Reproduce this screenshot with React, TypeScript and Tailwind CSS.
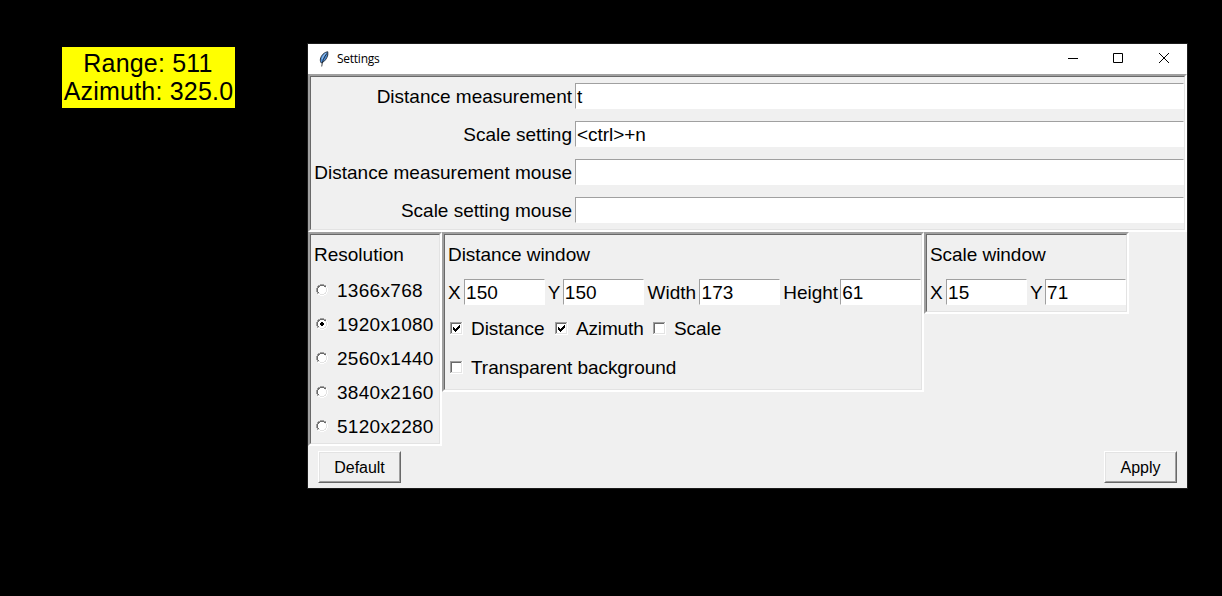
import type { ReactNode } from "react";

function Sunken({ className, children }: { className: string; children: ReactNode }) {
  return (
    <div className={`border-2 border-t-[#a0a0a0] border-l-[#a0a0a0] border-r-white border-b-white ${className}`}>
      <div className="h-full w-full border border-t-[#696969] border-l-[#696969] border-r-[#e3e3e3] border-b-[#e3e3e3]">
        {children}
      </div>
    </div>
  );
}

function Entry({ value, className }: { value: string; className: string }) {
  return (
    <div
      className={`h-[26px] border border-t-[#a0a0a0] border-l-[#a0a0a0] border-r-white border-b-white bg-white pl-px leading-[26px] whitespace-pre ${className}`}
    >
      {value}
    </div>
  );
}

function Check({ on }: { on: boolean }) {
  return (
    <svg width="13" height="13" viewBox="0 0 13 13" shapeRendering="crispEdges" className="shrink-0">
      <path d="M0 0h13v13H0z" fill="#fff" />
      <path d="M0 0h12v1H1v11H0z" fill="#a0a0a0" />
      <path d="M1 1h10v1H2v9H1z" fill="#696969" />
      <path d="M11 1h1v11H1v-1h10z" fill="#e3e3e3" />
      {on && <path d="M3 5h1v1h1v1h1V6h1V5h1V4h1V3h1v3H9v1H8v1H7v1H6v1H5V9H4V8H3z" fill="#000" />}
    </svg>
  );
}

function Radio({ on }: { on: boolean }) {
  return (
    <svg width="12" height="12" viewBox="0 0 12 12" shapeRendering="crispEdges" className="shrink-0">
      <path d="M4 1h4v1h2v2h1v4h-1v2H8v1H4v-1H2V8H1V4h1V2h2z" fill="#fff" />
      <path d="M4 0h4v1H4zM2 1h2v1H2zM8 1h2v1H8zM1 2h1v2H1zM0 4h1v4H0zM1 8h1v2H1z" fill="#a0a0a0" />
      <path d="M4 1h4v1H4zM2 2h2v1H2zM8 2h2v1H8zM2 3h1v1H2zM1 4h1v4H1zM2 8h1v1H2z" fill="#696969" />
      <path d="M9 3h1v1H9zM10 4h1v4h-1zM9 8h1v1H9zM8 9h2v1H8zM2 9h2v1H2zM4 10h4v1H4z" fill="#e3e3e3" />
      <path d="M10 2h1v2h-1zM11 4h1v4h-1zM10 8h1v2h-1zM8 10h2v1H8zM2 10h2v1H2zM4 11h4v1H4z" fill="#fff" />
      {on && <path d="M5 4h2v1h1v2H7v1H5V7H4V5h1z" fill="#000" />}
    </svg>
  );
}

function Button({ label, className }: { label: string; className: string }) {
  return (
    <div className={`h-8 border border-t-white border-l-white border-r-[#696969] border-b-[#696969] ${className}`}>
      <div className="h-full border border-t-[#e3e3e3] border-l-[#e3e3e3] border-r-[#a0a0a0] border-b-[#a0a0a0] text-center text-[16px] leading-[30px]">
        {label}
      </div>
    </div>
  );
}

const hotkeys = [
  ["Distance measurement", "t"],
  ["Scale setting", "<ctrl>+n"],
  ["Distance measurement mouse", ""],
  ["Scale setting mouse", ""],
];
const resolutions = ["1366x768", "1920x1080", "2560x1440", "3840x2160", "5120x2280"];

export default function App() {
  return (
    <div className="flex h-[596px] w-[1222px] items-start overflow-hidden bg-black font-['Liberation_Sans',Arial,sans-serif] text-[19px] tracking-[-0.05px] text-black">
      <div className="mt-[47px] ml-[62px] flex h-[61px] w-[173px] flex-col items-center bg-[#ffff00] pt-[2px] text-[25px] leading-[28px] tracking-[0.2px] whitespace-nowrap">
        <div className="pr-px">Range: 511</div>
        <div>Azimuth: 325.0</div>
      </div>
      <div className="mt-[44px] ml-[73px] flex h-[444px] w-[879px] flex-col bg-[#f0f0f0] outline outline-[#1c1c1c]">
        <div className="flex h-[30px] shrink-0 items-center bg-white">
          <svg width="10" height="16" viewBox="0 0 10 16" className="-mt-px ml-[11px]">
            <path d="M8.800.8C5.500 1 2 4.500 1.400 8c-.2 1.800 0 3 1 4C5.500 10.800 8 7.500 8.800 4z" fill="#4f8fd8" stroke="#1b222c" strokeWidth=".9" />
            <path d="M7 2.200C5 3.500 3.800 5.500 3.200 8" fill="none" stroke="#8fbdf0" strokeWidth="1.200" />
            <path d="M7.800 2.500C5 6.500 3.400 9.500 2.700 15.500" fill="none" stroke="#10151c" strokeWidth=".8" />
          </svg>
          <div className="ml-[8px] font-['Open_Sans','Noto_Sans',sans-serif] text-[12px] tracking-[-0.25px]">Settings</div>
          <svg width="167" height="30" viewBox="0 0 167 30" className="ml-auto shrink-0" fill="none" stroke="#000">
            <path d="M48 14.500h10" />
            <path d="M93.500 9.500h9v9h-9z" />
            <path d="M139 9l10 10M149 9l-10 10" />
          </svg>
        </div>
        <Sunken className="h-[158px] shrink-0">
          {hotkeys.map(([label, value]) => (
            <div key={label} className="flex h-[38px] items-center">
              <div className="w-[261px] shrink-0 pt-[2px] text-right tracking-normal whitespace-nowrap">{label}</div>
              <Entry value={value} className="ml-[3px] grow" />
            </div>
          ))}
        </Sunken>
        <div className="flex h-[214px] shrink-0 items-start">
          <Sunken className="h-[214px] w-[134px]">
            <div className="h-[38px] pl-[3px] leading-[40px] tracking-normal">Resolution</div>
            {resolutions.map((r) => (
              <div key={r} className="flex h-[34px] items-center pl-[5px]">
                <Radio on={r === "1920x1080"} />
                <span className="ml-[9px] pt-[2px] tracking-[0.3px]">{r}</span>
              </div>
            ))}
          </Sunken>
          <Sunken className="h-[160px] w-[482px]">
            <div className="h-[38px] pl-[3px] leading-[40px]">Distance window</div>
            <div className="flex h-[38px] items-center pl-[3px]">
              <span className="w-[16px] pt-[2px]">X</span>
              <Entry value="150" className="w-[81px] tracking-[0.1px]" />
              <span className="ml-[3px] w-[15px] pt-[2px]">Y</span>
              <Entry value="150" className="w-[81px] tracking-[0.1px]" />
              <span className="ml-[3px] w-[53px] pt-[2px] pl-px">Width</span>
              <Entry value="173" className="w-[81px] tracking-[0.1px]" />
              <span className="ml-[3px] w-[57px] pt-[2px]">Height</span>
              <Entry value="61" className="w-[81px]" />
            </div>
            <div className="flex h-[34px] items-center pl-[5px]">
              <Check on />
              <span className="ml-[8px] w-[84px] pt-[2px]">Distance</span>
              <Check on />
              <span className="ml-[8px] w-[77px] pt-[2px] tracking-[-0.15px]">Azimuth</span>
              <Check on={false} />
              <span className="ml-[8px] pt-[2px]">Scale</span>
            </div>
            <div className="flex h-[44px] items-center pl-[5px]">
              <Check on={false} />
              <span className="ml-[8px] pt-[2px]">Transparent background</span>
            </div>
          </Sunken>
          <Sunken className="h-[82px] w-[205px]">
            <div className="h-[38px] pl-[3px] leading-[40px]">Scale window</div>
            <div className="flex h-[38px] items-center pl-[3px]">
              <span className="w-[16px] pt-[2px]">X</span>
              <Entry value="15" className="w-[81px] tracking-[0.1px]" />
              <span className="ml-[3px] w-[15px] pt-[2px]">Y</span>
              <Entry value="71" className="w-[81px] tracking-[0.1px]" />
            </div>
          </Sunken>
        </div>
        <div className="flex justify-between px-[10px] pt-[5px]">
          <Button label="Default" className="w-[83px]" />
          <Button label="Apply" className="w-[73px]" />
        </div>
      </div>
    </div>
  );
}
